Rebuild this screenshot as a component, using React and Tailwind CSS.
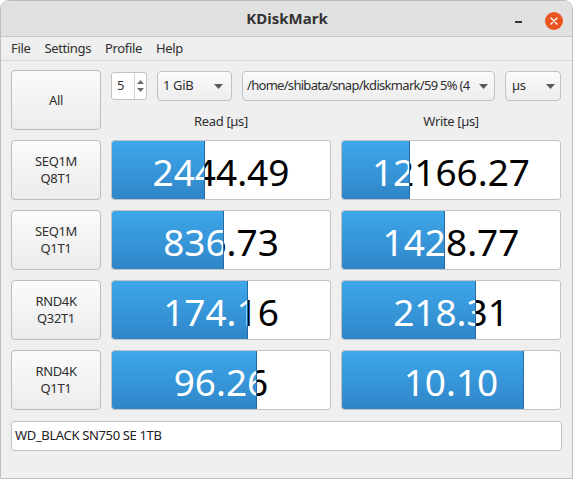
import React from "react";

const rows = [
  { l1: "SEQ1M", l2: "Q8T1", r: "2444.49", rw: 93, w: "12166.27", ww: 68 },
  { l1: "SEQ1M", l2: "Q1T1", r: "836.73", rw: 112, w: "1428.77", ww: 103 },
  { l1: "RND4K", l2: "Q32T1", r: "174.16", rw: 136, w: "218.31", ww: 134 },
  { l1: "RND4K", l2: "Q1T1", r: "96.26", rw: 145, w: "10.10", ww: 182 },
];

function Btn({ children }) {
  return (
    <div className="h-[60px] rounded-[4px] border border-[#bcbcbc] bg-gradient-to-b from-[#fbfbfb] to-[#ececec] flex flex-col items-center justify-center text-[13px] leading-[17px] text-[#2e2e2e]">
      {children}
    </div>
  );
}

function Bar({ value, fill }) {
  return (
    <div className="relative h-[60px] rounded-[3px] border border-[#c2c2c2] bg-white overflow-hidden tracking-normal">
      <div className="absolute inset-0 flex items-center justify-center pt-[4px] text-[37px] text-black font-['Noto_Sans',sans-serif]">
        {value}
      </div>
      <div
        className="absolute left-0 top-0 bottom-0 overflow-hidden bg-gradient-to-b from-[#3ea7ea] to-[#2f86c8] border-r border-[#2a6aa2] rounded-l-[2px]"
        style={{ width: fill }}
      >
        <div className="absolute left-0 top-0 bottom-0 w-[218px] flex items-center justify-center pt-[4px] text-[37px] text-white font-['Noto_Sans',sans-serif]">
          {value}
        </div>
      </div>
    </div>
  );
}

function Caret() {
  return (
    <svg width="9" height="5" viewBox="0 0 9 5" className="shrink-0">
      <path d="M0 0 L9 0 L4.5 5 Z" fill="#5a5a5a" />
    </svg>
  );
}

export default function App() {
  return (
    <div className="w-[573px] h-[479px] overflow-hidden font-['Noto_Sans',sans-serif] text-[#2e2e2e] tracking-[-0.35px]">
      <div className="h-full flex flex-col rounded-t-[9px] border border-[#bdbdbd] bg-[#efefef] overflow-hidden">
        {/* title bar */}
        <div className="h-[36px] shrink-0 bg-[#e1e1e1] border-b border-[#c9c9c9] flex items-center relative">
          <div className="flex-1 text-center text-[15px] font-bold text-[#333] pl-[1px] tracking-normal">KDiskMark</div>
          <div className="absolute right-[50px] top-[20px] w-[7px] h-[1.5px] bg-[#333]" />
          <div className="absolute right-[9px] top-[11px] w-[18px] h-[18px] rounded-full bg-[#e95420] flex items-center justify-center">
            <svg width="8" height="8" viewBox="0 0 8 8">
              <path d="M1 1 L7 7 M7 1 L1 7" stroke="white" strokeWidth="1.4" strokeLinecap="round" />
            </svg>
          </div>
        </div>
        {/* menu */}
        <div className="h-[24px] shrink-0 flex items-center border-b border-[#d6d6d6] pl-[3px] text-[13px] text-[#2e2e2e]">
          <span className="px-[7px]">File</span>
          <span className="px-[7px]">Settings</span>
          <span className="px-[7px]">Profile</span>
          <span className="px-[7px]">Help</span>
        </div>
        {/* content */}
        <div className="pt-[9px] pl-[10px] pr-[10px]">
          <div className="grid grid-cols-[90px_220px_220px] gap-x-[10px] gap-y-[10px]">
            <Btn>All</Btn>
            <div className="col-span-2 h-[60px] flex flex-col">
              <div className="h-[31px] shrink-0 flex items-center gap-[10px] pt-[1px]">
                <div className="w-[36px] h-[28px] rounded-[3px] border border-[#c2c2c2] bg-white flex items-center text-[13px]">
                  <span className="pl-[5px] flex-1">5</span>
                  <div className="w-[12px] h-full border-l border-[#d2d2d2] flex flex-col items-center justify-center gap-[4px]">
                    <svg width="7" height="4" viewBox="0 0 7 4"><path d="M0 4 L7 4 L3.5 0 Z" fill="#6a6a6a" /></svg>
                    <svg width="7" height="4" viewBox="0 0 7 4"><path d="M0 0 L7 0 L3.5 4 Z" fill="#6a6a6a" /></svg>
                  </div>
                </div>
                <div className="w-[75px] h-[30px] rounded-[4px] border border-[#c2c2c2] bg-gradient-to-b from-[#fbfbfb] to-[#ededed] flex items-center pl-[5px] pr-[8px] text-[13px]">
                  <span className="flex-1">1 GiB</span>
                  <Caret />
                </div>
                <div className="w-[253px] h-[30px] rounded-[4px] border border-[#c2c2c2] bg-gradient-to-b from-[#fbfbfb] to-[#ededed] flex items-center pl-[4px] pr-[6px] text-[13px]">
                  <span className="flex-1 overflow-hidden whitespace-nowrap tracking-[-0.7px]">/home/shibata/snap/kdiskmark/59 5% (4</span>
                  <span className="pl-[4px]"><Caret /></span>
                </div>
                <div className="w-[56px] h-[30px] rounded-[4px] border border-[#c2c2c2] bg-gradient-to-b from-[#fbfbfb] to-[#ededed] flex items-center pl-[6px] pr-[5px] text-[13px]">
                  <span className="flex-1">µs</span>
                  <Caret />
                </div>
              </div>
              <div className="grid grid-cols-2 gap-x-[10px] text-[13px] leading-[17px] pt-[12px]">
                <div className="text-center">Read [µs]</div>
                <div className="text-center">Write [µs]</div>
              </div>
            </div>
            {rows.map((r, i) => (
              <React.Fragment key={i}>
                <Btn>
                  <span>{r.l1}</span>
                  <span>{r.l2}</span>
                </Btn>
                <Bar value={r.r} fill={r.rw} />
                <Bar value={r.w} fill={r.ww} />
              </React.Fragment>
            ))}
          </div>
          <div className="mt-[11px] h-[30px] rounded-[3px] border border-[#c2c2c2] bg-white flex items-center pl-[3px] text-[13px] text-[#222]">
            WD_BLACK SN750 SE 1TB
          </div>
        </div>
      </div>
    </div>
  );
}
